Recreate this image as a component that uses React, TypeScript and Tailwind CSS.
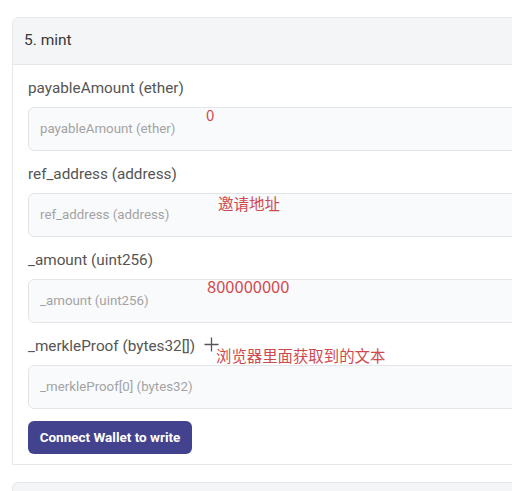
import React from "react"

type Field = {
  label: string
  placeholder: string
  plus?: boolean
  note?: string
  noteClass?: string
}

const fields: Field[] = [
  {
    label: "payableAmount (ether)",
    placeholder: "payableAmount (ether)",
    note: "0",
    noteClass: "left-[178px] top-[29px] text-[15px]",
  },
  {
    label: "ref_address (address)",
    placeholder: "ref_address (address)",
    note: "邀请地址",
    noteClass: "left-[190px] top-[32px] text-[15.5px]",
  },
  {
    label: "_amount (uint256)",
    placeholder: "_amount (uint256)",
    note: "800000000",
    noteClass: "left-[179px] top-[28px] text-[16.5px]",
  },
  {
    label: "_merkleProof (bytes32[])",
    placeholder: "_merkleProof[0] (bytes32)",
    plus: true,
    note: "浏览器里面获取到的文本",
    noteClass: "left-[188px] top-[12px] text-[15.4px]",
  },
]

export default function App() {
  return (
    <div className="w-[512px] h-[491px] overflow-hidden bg-white font-['Roboto','Noto_Sans_CJK_SC',sans-serif]">
      <div className="pl-3 pt-[17px]">
        <div className="w-[520px] rounded-tl-md border border-[#e6e7ea] bg-white">
          <div className="h-[47px] flex items-center px-[11px] bg-[#f4f5f7] border-b border-[#e6e7ea]">
            <span className="text-[15.5px] text-[#383838]">5. mint</span>
          </div>
          <div className="pl-[15px] pt-[13px] pb-[10px]">
            {fields.map((f) => (
              <div key={f.label} className="relative mb-[13px]">
                <div className="flex items-center gap-[10px] text-[15.3px] leading-5 text-[#555]">
                  <span>{f.label}</span>
                  {f.plus && (
                    <svg width="15" height="15" viewBox="0 0 15 15" className="-mt-1 -ml-px text-[#555]">
                      <path d="M7.5 0.5v14M0.5 7.5h14" stroke="currentColor" strokeWidth="1.3" />
                    </svg>
                  )}
                </div>
                <div className="mt-[9px] h-[44px] flex items-center pl-[11px] rounded-md border border-[#e3e5e9] bg-[#f9fafc]">
                  <span className="text-[13.3px] text-[#a3a3a3]">{f.placeholder}</span>
                </div>
                {f.note && (
                  <span
                    className={`absolute leading-none text-[#cf4a4f] font-['Noto_Sans_CJK_SC','Noto_Sans',sans-serif] ${f.noteClass}`}
                  >
                    {f.note}
                  </span>
                )}
              </div>
            ))}
            <button className="-mt-px h-[33px] w-[164px] rounded-md bg-[#42428f] text-[13.5px] font-bold text-white">
              Connect Wallet to write
            </button>
          </div>
        </div>
        <div className="mt-[17px] h-[20px] w-[520px] rounded-tl-md border border-[#e6e7ea] bg-[#f4f5f7]" />
      </div>
    </div>
  )
}
